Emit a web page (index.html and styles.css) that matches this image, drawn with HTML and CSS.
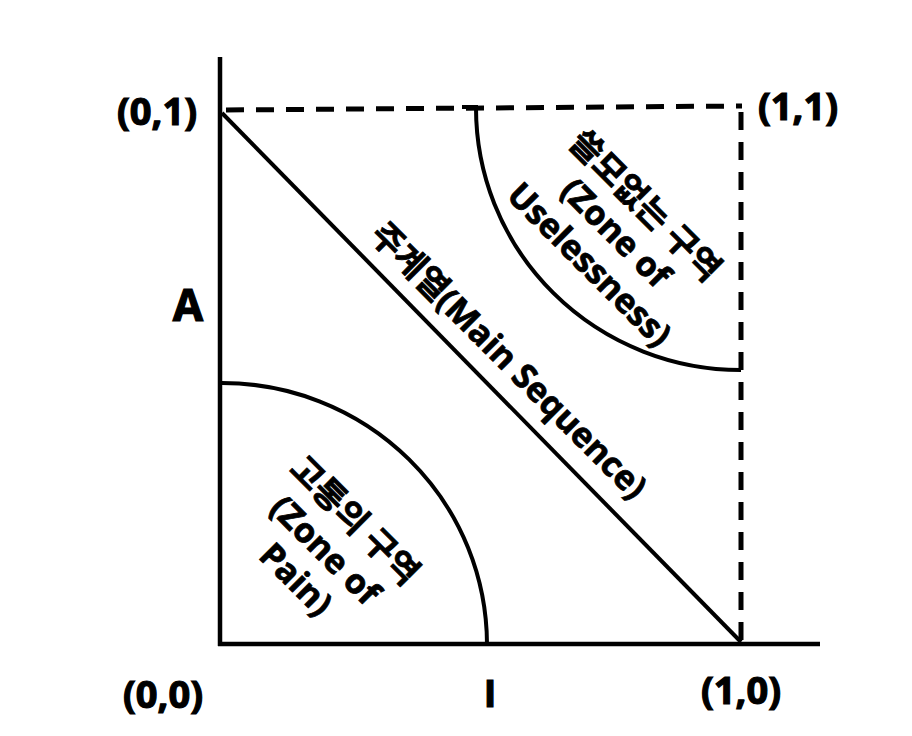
FILE: index.html
```html
<!DOCTYPE html>
<html lang="ko">
<head>
<meta charset="utf-8">
<title>주계열 다이어그램</title>
<link rel="stylesheet" href="styles.css">
</head>
<body>
<div class="canvas">
<svg class="chart" width="912" height="736" viewBox="0 0 912 736" xmlns="http://www.w3.org/2000/svg">
  <!-- axes -->
  <line class="axis" x1="220" y1="57" x2="220" y2="646"/>
  <line class="axis" x1="218" y1="644" x2="820" y2="644"/>
  <!-- dashed bounds -->
  <path class="dash" d="M226 110 L742 106"/>
  <path class="dash" d="M741 112 L741 640"/>
  <!-- main sequence -->
  <line class="line" x1="222" y1="113" x2="741" y2="642"/>
  <!-- zone arcs -->
  <path class="line" d="M222 383 A265 262 0 0 1 487 644"/>
  <path class="line" d="M462 107 L476 107 A265 262 0 0 0 741 370"/>

  <!-- axis labels -->
  <text class="lbl" x="157" y="110">(0,1)</text>
  <text class="lbl" x="798" y="105">(1,1)</text>
  <text class="lbl big" x="188" y="304">A</text>
  <text class="lbl" x="163" y="693">(0,0)</text>
  <text class="lbl" x="490" y="692">I</text>
  <text class="lbl" x="741" y="689">(1,0)</text>

  <!-- rotated zone labels -->
  <g transform="rotate(45)">
    <text class="zone" x="615" y="-106">주계열(Main Sequence)</text>
    <text class="zone" x="602" y="-312">쓸모없는 구역</text>
    <text class="zone" x="600" y="-272">(Zone of</text>
    <text class="zone" x="604" y="-231">Uselessness)</text>
    <text class="zone" x="619" y="116">고통의 구역</text>
    <text class="zone" x="619" y="158">(Zone of</text>
    <text class="zone" x="619" y="199">Pain)</text>
  </g>
</svg>
</div>
</body>
</html>
```
FILE: styles.css
```css
html, body {
  margin: 0;
  padding: 0;
  background: #ffffff;
}
.canvas {
  width: 912px;
  height: 736px;
  overflow: hidden;
}
.chart {
  display: block;
}
.axis {
  stroke: #000;
  stroke-width: 4.5;
  fill: none;
}
.line {
  stroke: #000;
  stroke-width: 4;
  fill: none;
}
.dash {
  stroke: #000;
  stroke-width: 5;
  stroke-dasharray: 18 12;
  fill: none;
}
.lbl, .zone {
  font-family: "Open Sans", "Noto Sans CJK KR", sans-serif;
  font-weight: 700;
  fill: #000;
  stroke: #000;
  stroke-width: 0.8;
  text-anchor: middle;
  dominant-baseline: central;
}
.lbl {
  font-size: 38px;
  stroke-width: 1.2;
}
.lbl.big {
  font-size: 44px;
}
.zone {
  font-size: 34px;
}
```
